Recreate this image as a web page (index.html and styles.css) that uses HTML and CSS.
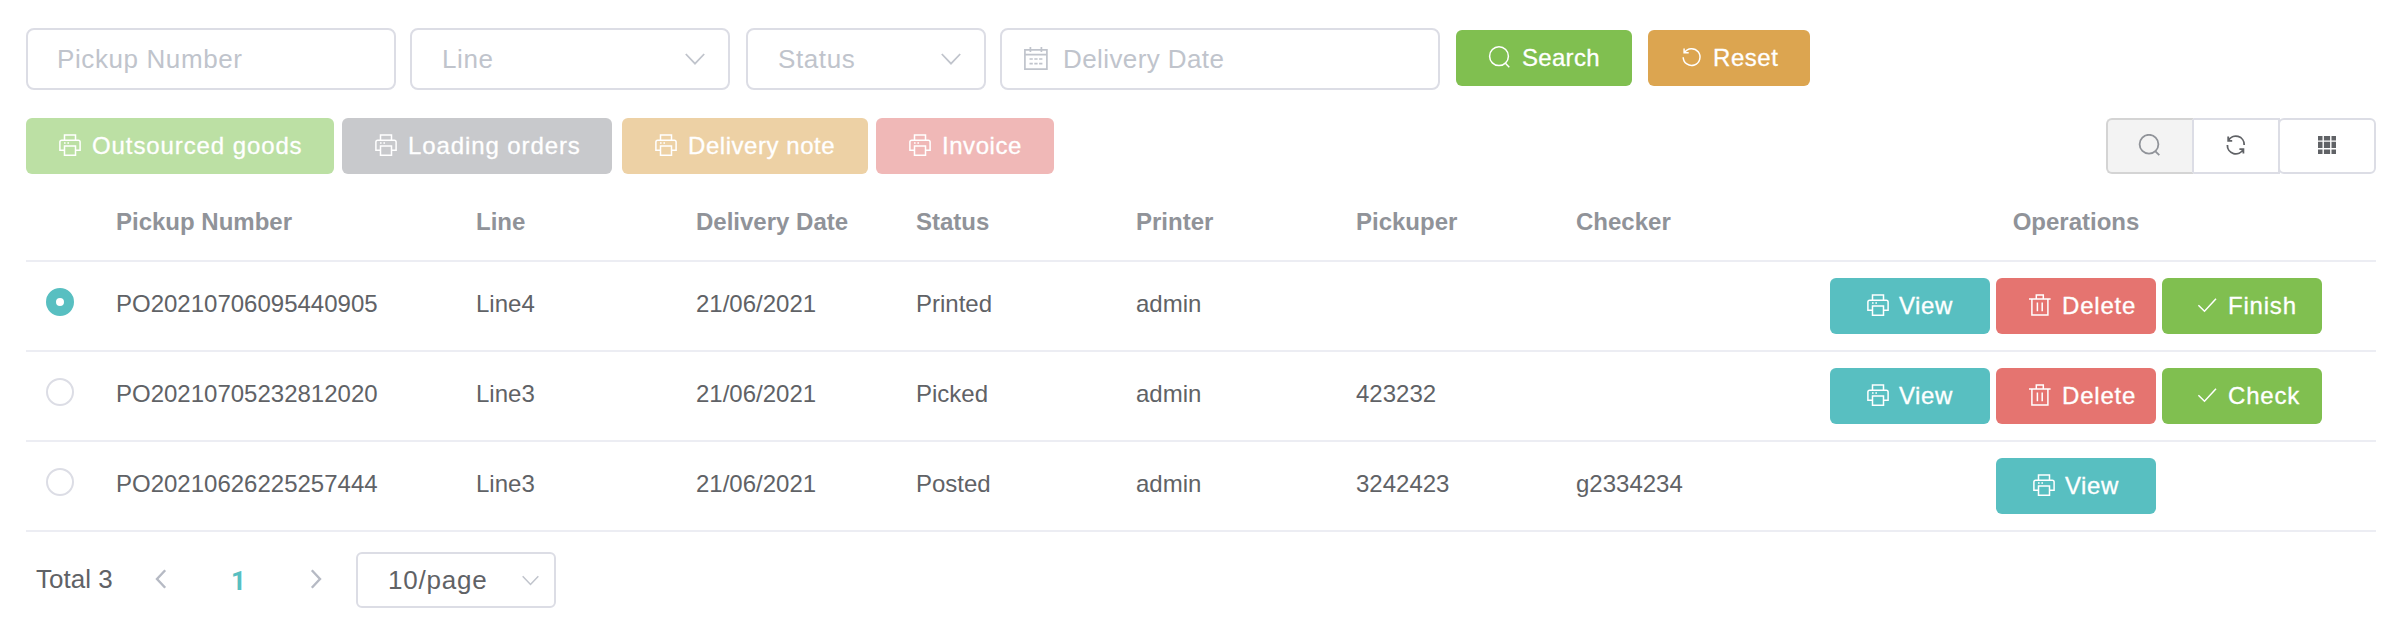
FILE: index.html
```html
<!DOCTYPE html>
<html lang="en">
<head>
<meta charset="utf-8">
<title>Pickup orders</title>
<link rel="stylesheet" href="styles.css">
</head>
<body>
<svg class="defs" width="0" height="0">
  <symbol id="printer" viewBox="0 0 24 24"><path d="M6.5 6V.9h11V6M6.5 16.2H1.9V8Q1.9 6.2 3.7 6.2h16.6q1.8 0 1.8 1.8v8.2h-4.6M6.5 12h11v9.3h-11z"/><path class="dot" d="M6 8.2h1.6v1.5H6zM9.4 8.2H11v1.5H9.4z"/></symbol>
  <symbol id="search" viewBox="0 0 24 24"><circle cx="11" cy="10.2" r="9.4"/><path d="M17.4 17.3l3.9 3.9"/></symbol>
  <symbol id="reset" viewBox="0 0 24 24"><path d="M4.1 2.4v4.4h4.6M4.5 6.6A8.4 8.4 0 1 1 3.2 11.2"/></symbol>
  <symbol id="trash" viewBox="0 0 24 24"><path d="M1 5h21.6M8.3 4.8V1h7v3.8M3.9 5.2v15.9h16V5.2M9.4 8.6v8.6M14.2 8.6v8.6"/></symbol>
  <symbol id="check" viewBox="0 0 24 24"><path d="M4.4 11.2l6.1 6L22 4.8"/></symbol>
  <symbol id="calendar" viewBox="0 0 24 24"><path d="M.9 2.8h22v19.4H.9zM.9 7.6h22M6.4 0v5M17.4 0v5M5.5 12h3.3M10.3 12h3.3M15.1 12h3.3M5.5 16.7h3.3M10.3 16.7h3.3M15.1 16.7h3.3"/></symbol>
  <symbol id="refresh" viewBox="0 0 24 24"><path d="M4.2 2.6v4.2h4M4.4 6.6A8.4 8.4 0 0 1 20.2 11M19.4 19.4v-4.2h-4M19.2 15.4A8.4 8.4 0 0 1 3.4 11"/></symbol>
  <symbol id="grid" viewBox="0 0 18 18"><path class="dot" d="M0 0h4.5v4.4H0zM5.9 0h6.2v4.4H5.9zM13.5 0H18v4.4h-4.5zM0 5.8h4.5v6.3H0zM5.9 5.8h6.2v6.3H5.9zM13.5 5.8H18v6.3h-4.5zM0 13.5h4.5V18H0zM5.9 13.5h6.2V18H5.9zM13.5 13.5H18V18h-4.5z"/></symbol>
  <symbol id="down" viewBox="0 0 20 12"><path d="M.8 1L10 10.6 19.2 1"/></symbol>
</svg>

<form class="filters">
  <div class="field field-number">Pickup Number</div>
  <div class="field field-line"><span>Line</span><svg class="chevron"><use href="#down"/></svg></div>
  <div class="field field-status"><span>Status</span><svg class="chevron"><use href="#down"/></svg></div>
  <div class="field field-date"><svg class="icon"><use href="#calendar"/></svg><span>Delivery Date</span></div>
  <button type="button" class="btn success search"><svg class="icon"><use href="#search"/></svg>Search</button>
  <button type="button" class="btn warning reset"><svg class="icon"><use href="#reset"/></svg>Reset</button>
</form>

<div class="toolbar">
  <button class="btn success pale goods"><svg class="icon"><use href="#printer"/></svg>Outsourced goods</button>
  <button class="btn info pale orders"><svg class="icon"><use href="#printer"/></svg>Loading orders</button>
  <button class="btn warning pale note"><svg class="icon"><use href="#printer"/></svg>Delivery note</button>
  <button class="btn danger pale invoice"><svg class="icon"><use href="#printer"/></svg>Invoice</button>
  <div class="tools">
    <button class="tool active"><svg class="icon"><use href="#search"/></svg></button>
    <button class="tool"><svg class="icon"><use href="#refresh"/></svg></button>
    <button class="tool last"><svg class="grid-icon"><use href="#grid"/></svg></button>
  </div>
</div>

<div class="table">
  <div class="row head">
    <span></span><span>Pickup Number</span><span>Line</span><span>Delivery Date</span><span>Status</span><span>Printer</span><span>Pickuper</span><span>Checker</span><span class="ops-title">Operations</span>
  </div>
  <div class="row">
    <span><i class="radio checked"></i></span><span>PO20210706095440905</span><span>Line4</span><span>21/06/2021</span><span>Printed</span><span>admin</span><span></span><span></span>
    <div class="ops">
      <button class="btn primary view"><svg class="icon"><use href="#printer"/></svg>View</button>
      <button class="btn danger"><svg class="icon"><use href="#trash"/></svg>Delete</button>
      <button class="btn success"><svg class="icon"><use href="#check"/></svg>Finish</button>
    </div>
  </div>
  <div class="row">
    <span><i class="radio"></i></span><span>PO20210705232812020</span><span>Line3</span><span>21/06/2021</span><span>Picked</span><span>admin</span><span>423232</span><span></span>
    <div class="ops">
      <button class="btn primary view"><svg class="icon"><use href="#printer"/></svg>View</button>
      <button class="btn danger"><svg class="icon"><use href="#trash"/></svg>Delete</button>
      <button class="btn success"><svg class="icon"><use href="#check"/></svg>Check</button>
    </div>
  </div>
  <div class="row">
    <span><i class="radio"></i></span><span>PO20210626225257444</span><span>Line3</span><span>21/06/2021</span><span>Posted</span><span>admin</span><span>3242423</span><span>g2334234</span>
    <div class="ops">
      <button class="btn primary view"><svg class="icon"><use href="#printer"/></svg>View</button>
    </div>
  </div>
</div>

<div class="pagination">
  <span class="total">Total 3</span>
  <svg class="arrow" viewBox="0 0 12 20"><path d="M10.2 1.2L2 10l8.2 8.8"/></svg>
  <span class="page">1</span>
  <svg class="arrow" viewBox="0 0 12 20"><path d="M1.8 1.2L10 10l-8.2 8.8"/></svg>
  <div class="page-size"><span>10/page</span><svg class="chevron"><use href="#down"/></svg></div>
</div>
</body>
</html>
```

FILE: styles.css
```css
* { box-sizing: border-box; }

body {
  margin: 0;
  padding: 28px 22px 0 26px;
  background: #fff;
  color: #606266;
  font-family: "Liberation Sans", Arial, sans-serif;
  font-size: 24px;
}

.defs { position: absolute; }

svg { fill: none; stroke: currentColor; stroke-width: 1.5; flex: none; }
.dot { fill: currentColor; stroke: none; }
.icon { width: 24px; height: 24px; }

/* Filters */
.filters { display: flex; height: 62px; }

.field {
  display: flex;
  align-items: center;
  height: 62px;
  border: 2px solid #dcdde5;
  border-radius: 8px;
  color: #c0c4cc;
  font-size: 26px;
  letter-spacing: 0.6px;
  white-space: nowrap;
}
.field-number { width: 370px; padding-left: 29px; }
.field-line { width: 320px; margin-left: 14px; padding: 0 23px 0 30px; }
.field-status { width: 240px; margin-left: 16px; padding: 0 23px 0 30px; }
.field-line, .field-status { justify-content: space-between; }
.field-date { width: 440px; margin-left: 14px; padding-left: 22px; gap: 15px; letter-spacing: 0.4px; }
.field-date .icon { stroke-width: 1.7; }
.chevron { width: 20px; height: 12px; stroke-width: 1.8; }

/* Buttons */
.btn {
  display: flex;
  align-items: center;
  gap: 10px;
  height: 56px;
  padding: 0 0 0 32px;
  border: 0;
  border-radius: 6px;
  color: #fff;
  font: inherit;
  letter-spacing: 0.55px;
  white-space: nowrap;
  -webkit-text-stroke: 0.3px #fff;
}
.primary { background: #58bfc1; }
.success { background: #80bf50; }
.warning { background: #dca550; }
.danger { background: #e57470; }
.success.pale { background: #bce0a4; }
.info.pale { background: #c8c9cc; }
.warning.pale { background: #edd1a5; }
.danger.pale { background: #f0b8b7; }

.search { width: 176px; margin: 2px 0 0 16px; letter-spacing: 0.3px; }
.reset { width: 162px; margin: 2px 0 0 16px; gap: 9px; }

.toolbar { display: flex; height: 56px; margin-top: 28px; }
.goods { width: 308px; letter-spacing: 0.9px; }
.orders { width: 270px; margin-left: 8px; letter-spacing: 0.9px; }
.note { width: 246px; margin-left: 10px; }
.invoice { width: 178px; margin-left: 8px; }

.tools { display: flex; margin-left: auto; }
.tool {
  display: flex;
  align-items: center;
  justify-content: center;
  width: 86px;
  height: 56px;
  padding: 0;
  border: 2px solid #dcdde5;
  border-left: 0;
  background: #fff;
  color: #606266;
}
.tool .icon { stroke-width: 1.8; }
.tool.active {
  width: 88px;
  border-color: #d4d4d4 #dcdde5 #d4d4d4 #d4d4d4;
  border-left: 2px solid #d4d4d4;
  border-radius: 6px 0 0 6px;
  background: #f3f3f3;
  color: #909399;
}
.tool.last { width: 98px; margin-left: -2px; border-left: 2px solid #dcdde5; border-radius: 6px; }
.grid-icon { width: 18px; height: 18px; margin-bottom: 2px; }

/* Table */
.table { width: 2350px; margin-top: 10px; }
.row {
  display: grid;
  grid-template-columns: 70px 360px repeat(6, 220px) 600px;
  align-items: center;
  height: 90px;
  border-bottom: 2px solid #ecedf3;
}
.row > span { padding: 0 0 5px 20px; }
.row.head { height: 78px; color: #909399; font-weight: bold; }
.row.head > span { padding-bottom: 0; }
.row.head > .ops-title { padding: 0; text-align: center; }

.radio {
  display: block;
  width: 28px;
  height: 28px;
  margin-bottom: 3px;
  border: 2px solid #dcdde5;
  border-radius: 50%;
}
.radio.checked { border: 10px solid #58bfc1; }

.ops { display: flex; justify-content: center; gap: 6px; }
.ops .btn { width: 160px; letter-spacing: 0.8px; }
.ops .view { padding-left: 36px; gap: 9px; letter-spacing: 0.55px; }

/* Pagination */
.pagination { display: flex; align-items: center; height: 56px; margin-top: 20px; font-size: 26px; }
.total { width: 129px; padding: 0 0 2px 10px; white-space: nowrap; }
.arrow { width: 12px; height: 20px; margin-bottom: 2px; color: #b6bac4; stroke-width: 2.4; }
.page {
  width: 143px;
  padding-top: 1px;
  color: #58bfc1;
  font-family: Roboto, sans-serif;
  font-weight: bold;
  text-align: center;
}
.page-size {
  display: flex;
  align-items: center;
  justify-content: space-between;
  width: 200px;
  height: 56px;
  margin-left: 34px;
  padding: 0 15px 0 30px;
  border: 2px solid #dcdde5;
  border-radius: 6px;
  letter-spacing: 0.8px;
}
.page-size .chevron { width: 17px; height: 11px; color: #c0c4cc; }
```
